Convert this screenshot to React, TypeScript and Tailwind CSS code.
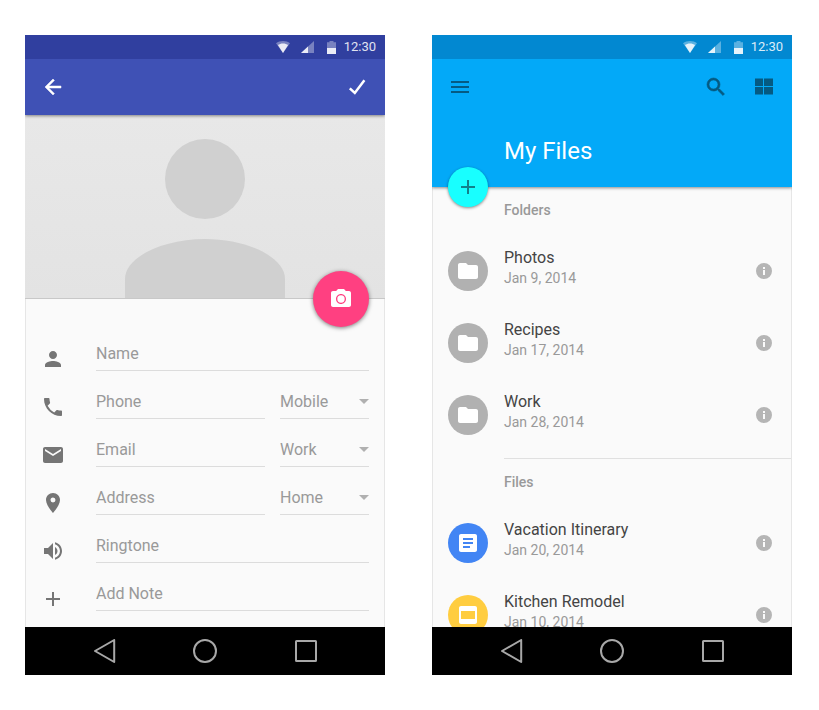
import { useState, type ReactNode } from "react";

function Icon({ d, className = "" }: { d: string; className?: string }) {
  return (
    <svg viewBox="0 0 24 24" className={`size-6 shrink-0 fill-current ${className}`} aria-hidden="true">
      <path d={d} />
    </svg>
  );
}

const paths = {
  back: "M20 11H7.83l5.59-5.59L12 4l-8 8 8 8 1.41-1.41L7.83 13H20v-2z",
  menu: "M3 18h18v-2H3v2zm0-5h18v-2H3v2zm0-7v2h18V6H3z",
  search:
    "M15.5 14h-.79l-.28-.27A6.47 6.47 0 0 0 16 9.5 6.5 6.5 0 1 0 9.5 16c1.61 0 3.09-.59 4.23-1.57l.27.28v.79l5 4.99L20.49 19l-4.99-5zm-6 0C7.01 14 5 11.99 5 9.5S7.01 5 9.5 5 14 7.01 14 9.5 11.99 14 9.5 14z",
  grid: "M3 3.500h8v7.500H3zM12 3.500h9v7.500h-9zM3 12h8v7.500H3zM12 12h9v7.500h-9z",
  camera:
    "M12 8.300a3.700 3.700 0 1 0 0 7.400 3.700 3.700 0 0 0 0-7.400zM9 2L7.17 4H4c-1.1 0-2 .9-2 2v12c0 1.1.9 2 2 2h16c1.1 0 2-.9 2-2V6c0-1.1-.9-2-2-2h-3.17L15 2H9zm3 15c-2.76 0-5-2.24-5-5s2.24-5 5-5 5 2.24 5 5-2.24 5-5 5z",
  person:
    "M12 12c2.21 0 4-1.79 4-4s-1.79-4-4-4-4 1.79-4 4 1.79 4 4 4zm0 2c-2.67 0-8 1.34-8 4v2h16v-2c0-2.66-5.33-4-8-4z",
  phone:
    "M6.62 10.79a15.15 15.15 0 0 0 6.59 6.59l2.2-2.2c.27-.27.67-.36 1.02-.24 1.12.37 2.33.57 3.57.57.55 0 1 .45 1 1V20c0 .55-.45 1-1 1C10.61 21 3 13.39 3 4c0-.55.45-1 1-1h3.5c.55 0 1 .45 1 1 0 1.25.2 2.45.57 3.57.11.35.03.74-.25 1.02l-2.2 2.2z",
  mail: "M20 4H4c-1.1 0-2 .9-2 2v12c0 1.1.9 2 2 2h16c1.1 0 2-.9 2-2V6c0-1.1-.9-2-2-2zm0 4l-8 5-8-5V6l8 5 8-5v2z",
  place:
    "M12 2C8.13 2 5 5.13 5 9c0 5.25 7 13 7 13s7-7.75 7-13c0-3.87-3.13-7-7-7zm0 9.5a2.5 2.5 0 0 1 0-5 2.5 2.5 0 0 1 0 5z",
  volume:
    "M3 9v6h4l5 5V4L7 9H3zm13.5 3c0-1.77-1.02-3.29-2.5-4.03v8.05c1.48-.73 2.5-2.25 2.5-4.02zM14 3.23v2.06c2.89.86 5 3.54 5 6.71s-2.11 5.85-5 6.71v2.06c4.01-.91 7-4.49 7-8.77s-2.99-7.86-7-8.77z",
  add: "M19 13h-6v6h-2v-6H5v-2h6V5h2v6h6v2z",
  folder: "M10 4H4c-1.1 0-1.99.9-1.99 2L2 18c0 1.1.9 2 2 2h16c1.1 0 2-.9 2-2V8c0-1.1-.9-2-2-2h-8l-2-2z",
  article:
    "M19 3H5c-1.1 0-2 .9-2 2v14c0 1.1.9 2 2 2h14c1.1 0 2-.9 2-2V5c0-1.1-.9-2-2-2zm-5 14H7v-2h7v2zm3-4H7v-2h10v2zm0-4H7V7h10v2z",
  slideshow:
    "M19 3H5c-1.1 0-2 .9-2 2v14c0 1.1.9 2 2 2h14c1.1 0 2-.9 2-2V5c0-1.1-.9-2-2-2zm0 13H5V8h14v8z",
  info: "M12 4a8 8 0 1 0 0 16 8 8 0 0 0 0-16zm1 12h-2v-5h2v5zm0-6h-2V8h2v2z",
};

function StatusBar({ className }: { className: string }) {
  return (
    <div className={`z-20 flex h-6 shrink-0 items-center justify-end pr-[9px] text-white ${className}`}>
      <svg viewBox="0 0 14 12" className="mr-[11px] h-3 w-3.5 fill-white" aria-hidden="true">
        <path opacity=".35" d="M7 0C4.3 0 1.900.9 0 2.300L7 12l7-9.700C12.100.9 9.700 0 7 0z" />
        <path opacity=".85" d="M7 2.500c-2 0-3.700.6-5.100 1.600L7 12l5.100-7.900C10.700 3.100 9 2.500 7 2.500z" />
      </svg>
      <svg viewBox="0 0 13 12" className="mr-[13px] h-3 w-[13px] fill-white" aria-hidden="true">
        <path opacity=".35" d="M13 0L0 12h13z" />
        <path opacity=".85" d="M7 5.500L0 12h7z" />
      </svg>
      <svg viewBox="0 0 9 13" className="mr-2 h-[13px] w-[9px] fill-white" aria-hidden="true">
        <path opacity=".35" d="M2.500 0h4v1.300H9V7H0V1.300h2.500z" />
        <path opacity=".9" d="M0 7h9v6H0z" />
      </svg>
      <span className="text-[13px] leading-5 opacity-85">12:30</span>
    </div>
  );
}

function NavBar() {
  const shape = "size-6 fill-none stroke-[#a8a8a8] stroke-2";
  return (
    <nav className="flex h-12 shrink-0 items-center justify-center gap-[77px] bg-black">
      <button type="button" aria-label="Back">
        <svg viewBox="0 0 24 24" className={shape} strokeLinejoin="round">
          <path d="M22.200 1v22L3 12z" />
        </svg>
      </button>
      <button type="button" aria-label="Home">
        <svg viewBox="0 0 24 24" className={shape}>
          <circle cx="12" cy="12" r="11" />
        </svg>
      </button>
      <button type="button" aria-label="Overview">
        <svg viewBox="0 0 24 24" className={shape}>
          <rect x="2" y="2" width="20" height="20" rx=".5" />
        </svg>
      </button>
    </nav>
  );
}

function Phone({ statusColor, children }: { statusColor: string; children: ReactNode }) {
  return (
    <section className="flex aspect-[9/16] min-w-0 flex-col overflow-hidden bg-[#fafafa]">
      <StatusBar className={statusColor} />
      {children}
      <NavBar />
    </section>
  );
}

type Field = { id: string; label: string; icon: string; type?: string; kind?: string };

const fields: Field[] = [
  { id: "name", label: "Name", icon: paths.person },
  { id: "phone", label: "Phone", icon: paths.phone, type: "tel", kind: "Mobile" },
  { id: "email", label: "Email", icon: paths.mail, type: "email", kind: "Work" },
  { id: "address", label: "Address", icon: paths.place, kind: "Home" },
  { id: "ringtone", label: "Ringtone", icon: paths.volume },
  { id: "note", label: "Add Note", icon: paths.add },
];

function KindSelect({ id, label, initial }: { id: string; label: string; initial: string }) {
  const [value, setValue] = useState(initial);
  return (
    <div className="relative w-[89px] shrink-0">
      <select
        id={id}
        aria-label={label}
        value={value}
        onChange={(e) => setValue(e.target.value)}
        className="block h-[29px] w-full appearance-none border-b border-[#dcdcdc] bg-transparent pb-1 text-base leading-6 text-[#999] outline-none"
      >
        <option>Mobile</option>
        <option>Work</option>
        <option>Home</option>
      </select>
      <svg viewBox="0 0 10 5" className="pointer-events-none absolute top-[9px] right-0 h-[5px] w-2.5 fill-[#b0b0b0]" aria-hidden="true">
        <path d="M0 0h10L5 5z" />
      </svg>
    </div>
  );
}

function FieldRow({ field }: { field: Field }) {
  return (
    <div className="flex h-12 items-end">
      <label htmlFor={field.id} className="mr-[31px] text-[#757575]">
        <Icon d={field.icon} />
      </label>
      <div className="flex min-w-0 flex-1 gap-[15px]">
        <input
          id={field.id}
          aria-label={field.label}
          type={field.type ?? "text"}
          placeholder={field.label}
          className="block h-[29px] w-full min-w-0 flex-1 border-b border-[#dcdcdc] bg-transparent pb-1.5 text-base leading-6 text-[#444] outline-none placeholder:text-[#999]"
        />
        {field.kind && <KindSelect id={`${field.id}-kind`} label={`${field.label} type`} initial={field.kind} />}
      </div>
    </div>
  );
}

function ContactScreen() {
  return (
    <Phone statusColor="bg-[#303f9f]">
      <header className="z-10 flex h-14 shrink-0 items-center justify-between bg-[#3f51b5] px-4 text-white shadow-[0_1px_3px_rgba(0,0,0,0.45)]">
        <button type="button" aria-label="Back">
          <Icon d={paths.back} className="stroke-current stroke-[0.500]" />
        </button>
        <button type="button" aria-label="Save">
          <svg viewBox="0 0 24 24" className="size-6 fill-none stroke-white stroke-[2.500]">
            <path d="M4.800 13.300l5 4.600L19.400 5.300" />
          </svg>
        </button>
      </header>
      <div className="relative flex h-46 shrink-0 items-end justify-center border-b border-[#c8c8c8] bg-linear-to-b from-[#e8e8e8] to-[#e3e3e3]">
        <svg viewBox="0 0 160 160" className="-mb-px size-40 fill-[#d0d0d0]" aria-hidden="true">
          <circle cx="80" cy="40" r="40" />
          <path d="M0 159V140c0-22 38-40 80-40s80 18 80 40v19z" />
        </svg>
        <button
          type="button"
          aria-label="Add photo"
          className="absolute right-4 -bottom-[29px] flex size-14 items-center justify-center rounded-full bg-[#ff4081] text-white shadow-[0_1px_4px_rgba(0,0,0,0.5)]"
        >
          <Icon d={paths.camera} />
        </button>
      </div>
      <form className="flex-1 border-x border-[#e6e6e6] px-[15px] pt-6">
        {fields.map((field) => (
          <FieldRow key={field.id} field={field} />
        ))}
      </form>
    </Phone>
  );
}

type Entry = { name: string; date: string; icon: string; color: string };

const folders: Entry[] = [
  { name: "Photos", date: "Jan 9, 2014", icon: paths.folder, color: "bg-[#b1b1b1]" },
  { name: "Recipes", date: "Jan 17, 2014", icon: paths.folder, color: "bg-[#b1b1b1]" },
  { name: "Work", date: "Jan 28, 2014", icon: paths.folder, color: "bg-[#b1b1b1]" },
];

const files: Entry[] = [
  { name: "Vacation Itinerary", date: "Jan 20, 2014", icon: paths.article, color: "bg-[#4285f4]" },
  { name: "Kitchen Remodel", date: "Jan 10, 2014", icon: paths.slideshow, color: "bg-[#ffcd40]" },
];

function EntryList({ title, entries }: { title: string; entries: Entry[] }) {
  return (
    <>
      <h2 className="h-12 pt-[13px] pl-[71px] text-sm font-medium text-[#999]">{title}</h2>
      <ul>
        {entries.map((entry) => (
          <li key={entry.name} className="flex h-18 items-center px-[15px]">
            <span className={`mr-4 flex size-10 shrink-0 items-center justify-center rounded-full text-white ${entry.color}`}>
              <Icon d={entry.icon} />
            </span>
            <div className="min-w-0 flex-1 pb-1.5">
              <p className="text-base leading-5 text-[#444]">{entry.name}</p>
              <p className="text-sm leading-5 text-[#999]">{entry.date}</p>
            </div>
            <button type="button" aria-label={`About ${entry.name}`} className="text-[#b5b5b5]">
              <Icon d={paths.info} />
            </button>
          </li>
        ))}
      </ul>
    </>
  );
}

function FilesScreen() {
  return (
    <Phone statusColor="bg-[#0288d1]">
      <header className="relative z-10 flex h-32 shrink-0 flex-col justify-between bg-[#03a9f8] px-4 pt-4 pb-5 shadow-[0_1px_3px_rgba(0,0,0,0.45)]">
        <div className="flex items-center gap-6 text-[#055a82]">
          <button type="button" aria-label="Menu" className="mr-auto">
            <Icon d={paths.menu} />
          </button>
          <button type="button" aria-label="Search">
            <Icon d={paths.search} className="stroke-current stroke-[0.600]" />
          </button>
          <button type="button" aria-label="Grid view">
            <Icon d={paths.grid} />
          </button>
        </div>
        <h1 className="pl-14 text-2xl leading-8 text-white">My Files</h1>
        <button
          type="button"
          aria-label="Add file"
          className="absolute -bottom-5 left-4 flex size-10 items-center justify-center rounded-full bg-[#18ffff] text-[#12808a] shadow-[0_1px_3px_rgba(0,0,0,0.45)]"
        >
          <Icon d={paths.add} />
        </button>
      </header>
      <div className="min-h-0 flex-1 overflow-y-auto border-x border-[#e6e6e6] [scrollbar-width:none]">
        <EntryList title="Folders" entries={folders} />
        <hr className="mt-[7px] ml-[71px] border-[#e0e0e0]" />
        <EntryList title="Files" entries={files} />
      </div>
    </Phone>
  );
}

export default function App() {
  return (
    <main className="grid grid-cols-2 gap-[47px] bg-white pt-[35px] pr-[27px] pb-[35px] pl-[25px] font-[Roboto,sans-serif]">
      <ContactScreen />
      <FilesScreen />
    </main>
  );
}
